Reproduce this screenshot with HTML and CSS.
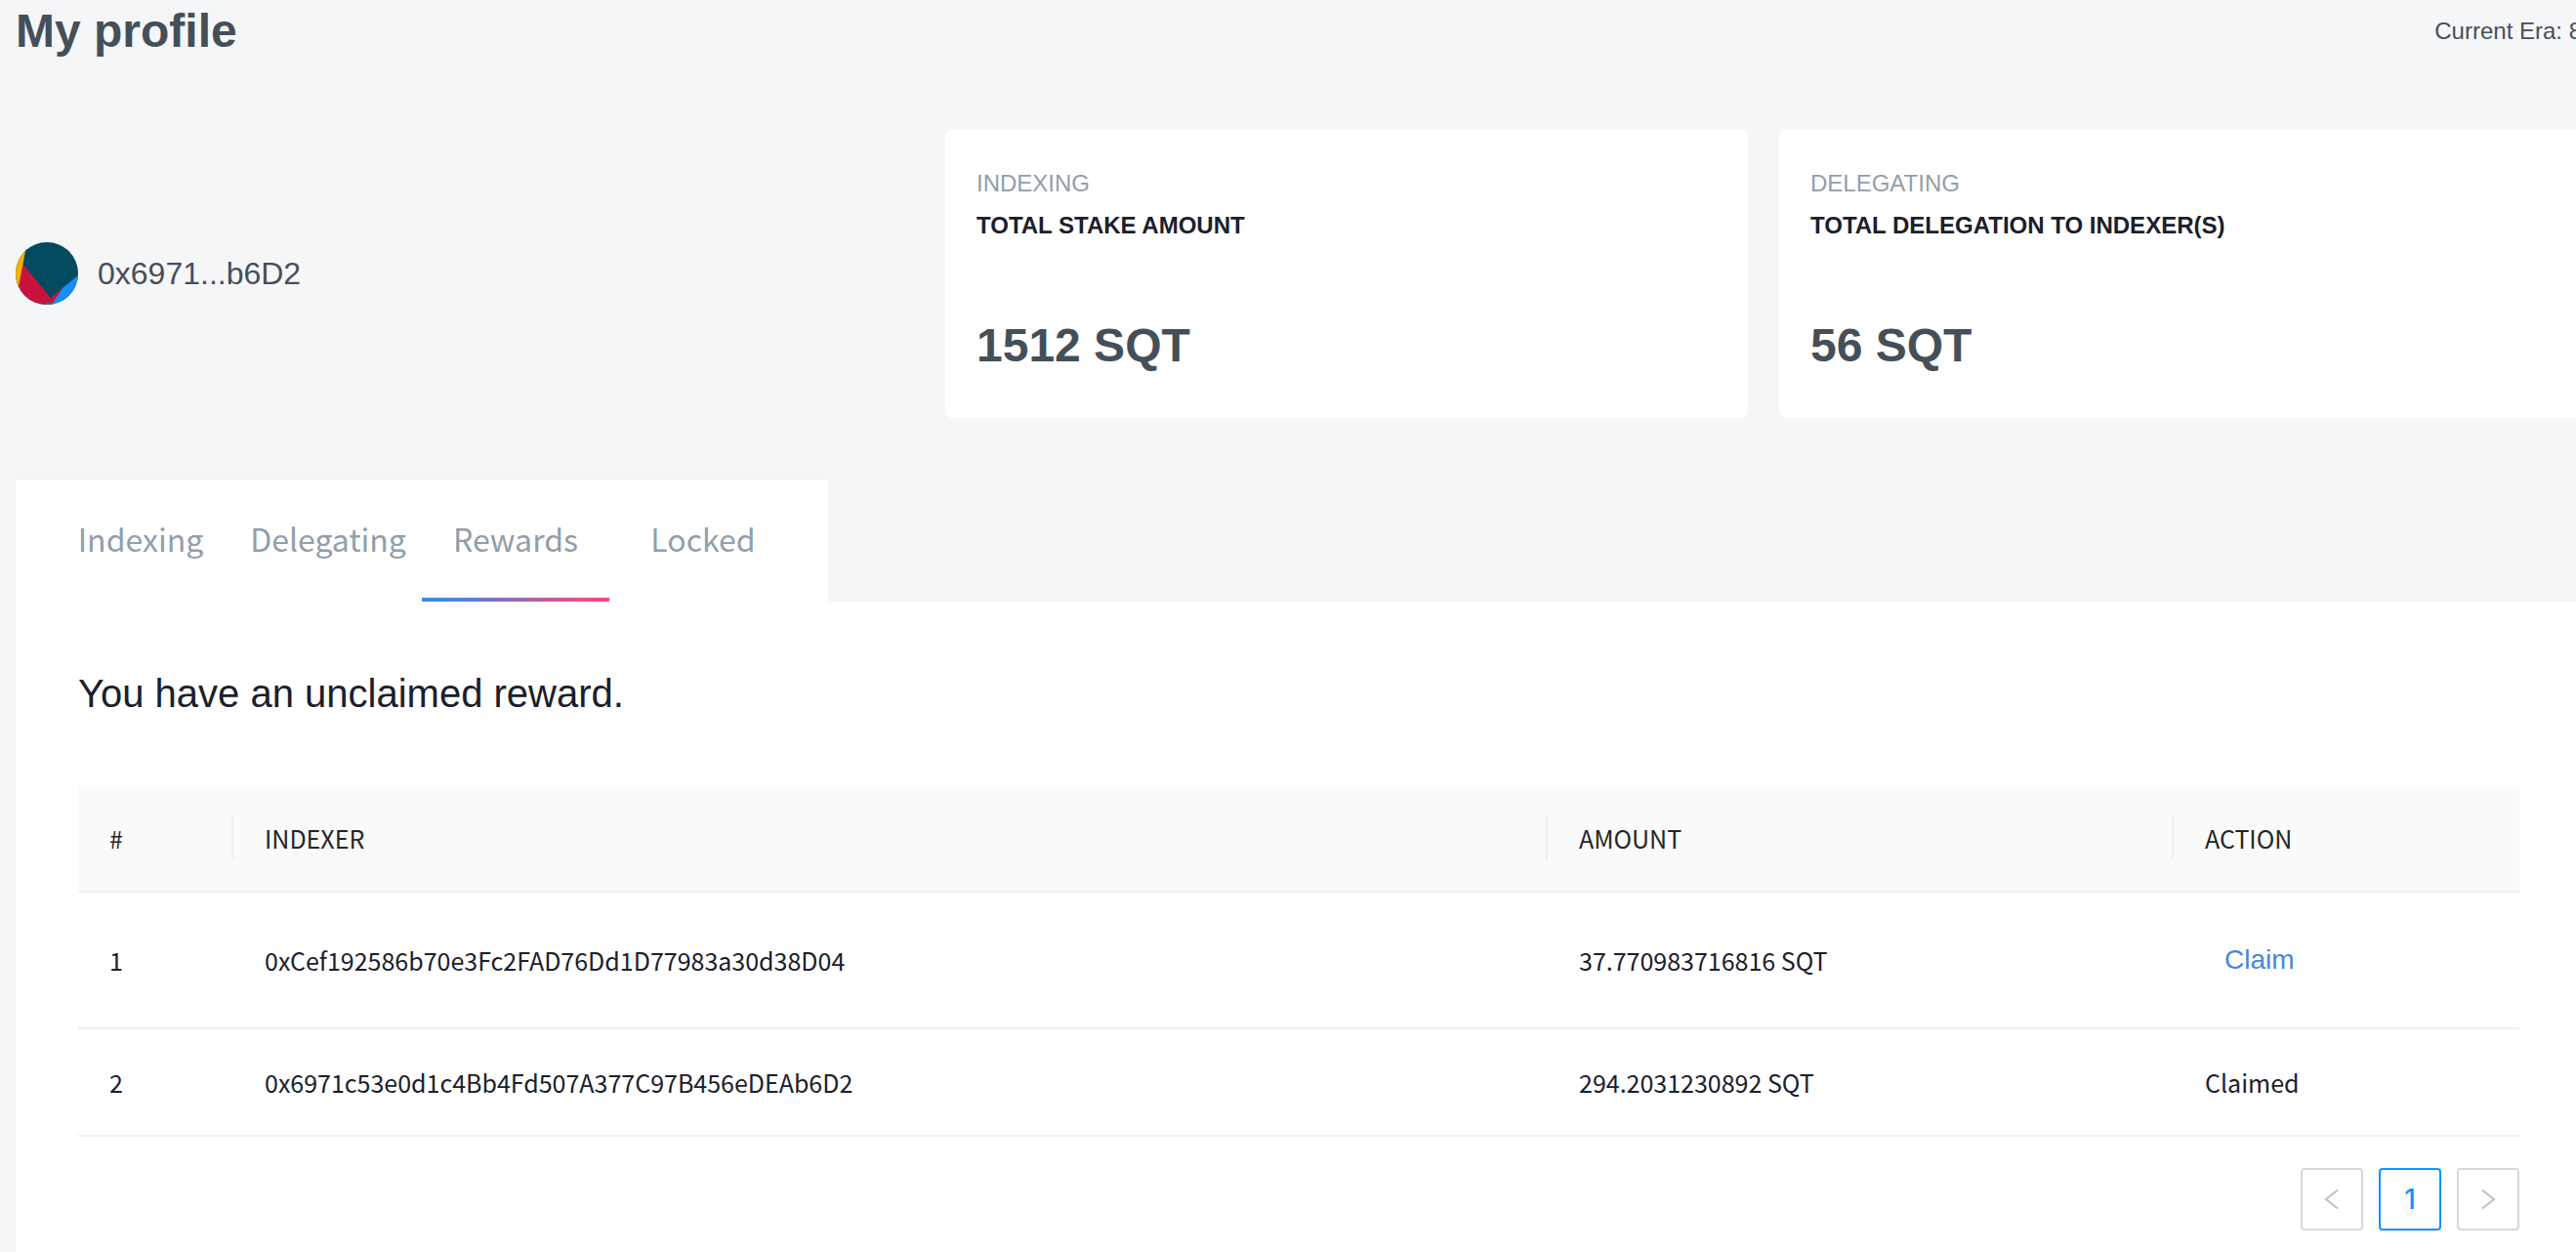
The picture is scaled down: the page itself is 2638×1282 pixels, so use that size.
FILE: index.html
```html
<!DOCTYPE html>
<html lang="en">
<head>
<meta charset="utf-8">
<title>My profile</title>
<link rel="stylesheet" href="styles.css">
</head>
<body>
<main class="profile">
  <header class="page-header">
    <h1 class="page-title">My profile</h1>
    <p class="era">Current Era: 8</p>
  </header>

  <section class="summary">
    <div class="account">
      <svg class="avatar" viewBox="0 0 64 64" aria-hidden="true">
        <defs><clipPath id="avatar-clip"><circle cx="32" cy="32" r="32"/></clipPath></defs>
        <g clip-path="url(#avatar-clip)">
          <rect width="64" height="64" fill="#024a5e"/>
          <path d="M7 22L36 57L48 47L38 64H0V40Z" fill="#c8143c"/>
          <path d="M0 8L10 9L3 46L0 46Z" fill="#f3b200"/>
          <path d="M64 34L48 47L37 64H64Z" fill="#198cf5"/>
          <path d="M28 64L35 61L37 64Z" fill="#187c84"/>
        </g>
      </svg>
      <span class="address">0x6971...b6D2</span>
    </div>
    <article class="card">
      <p class="card-category">INDEXING</p>
      <h2 class="card-title">TOTAL STAKE AMOUNT</h2>
      <p class="card-value">1512 SQT</p>
    </article>
    <article class="card">
      <p class="card-category">DELEGATING</p>
      <h2 class="card-title">TOTAL DELEGATION TO INDEXER(S)</h2>
      <p class="card-value">56 SQT</p>
    </article>
  </section>

  <nav class="tabs">
    <a class="tab" href="#indexing">Indexing</a>
    <a class="tab" href="#delegating">Delegating</a>
    <a class="tab tab-active" href="#rewards" aria-current="page">Rewards</a>
    <a class="tab" href="#locked">Locked</a>
  </nav>

  <section class="panel">
    <h2 class="panel-title">You have an unclaimed reward.</h2>
    <table class="rewards">
      <colgroup>
        <col class="col-index">
        <col>
        <col class="col-amount">
        <col class="col-action">
      </colgroup>
      <thead>
        <tr>
          <th scope="col"><span class="head-label">#</span></th>
          <th scope="col"><span class="head-label">INDEXER</span></th>
          <th scope="col"><span class="head-label">AMOUNT</span></th>
          <th scope="col"><span class="head-label">ACTION</span></th>
        </tr>
      </thead>
      <tbody>
        <tr>
          <td>1</td>
          <td>0xCef192586b70e3Fc2FAD76Dd1D77983a30d38D04</td>
          <td>37.770983716816 SQT</td>
          <td><button class="claim" type="button">Claim</button></td>
        </tr>
        <tr>
          <td>2</td>
          <td>0x6971c53e0d1c4Bb4Fd507A377C97B456eDEAb6D2</td>
          <td>294.2031230892 SQT</td>
          <td>Claimed</td>
        </tr>
      </tbody>
    </table>
    <nav class="pagination" aria-label="Pagination">
      <button class="page-button" type="button" disabled aria-label="Previous page">
        <svg class="chevron" viewBox="0 0 24 24" aria-hidden="true"><path d="M18 2.500L6 12L18 21.500"/></svg>
      </button>
      <button class="page-button page-current" type="button" aria-current="page">1</button>
      <button class="page-button" type="button" disabled aria-label="Next page">
        <svg class="chevron" viewBox="0 0 24 24" aria-hidden="true"><path d="M6 2.500L18 12L6 21.500"/></svg>
      </button>
    </nav>
  </section>
</main>
</body>
</html>
```
FILE: styles.css
```css
* { box-sizing: border-box; }

html { background: #f5f6f8; }

body {
  margin: 0;
  overflow-x: hidden;
  color: #1a202c;
  font-family: "Liberation Sans", Arial, sans-serif;
}

h1, h2, p { margin: 0; }

/* The content column runs slightly past the right edge of the window. */
.profile {
  display: flex;
  flex-direction: column;
  min-height: 100vh;
  margin: 0 -6px 0 16px;
}

.page-header {
  display: flex;
  align-items: center;
  justify-content: space-between;
  height: 64px;
  margin-bottom: 68px;
}

.page-title {
  color: #454f58;
  font-size: 48px;
  line-height: 64px;
}

.era {
  color: #454f58;
  font-size: 24px;
  line-height: 64px;
  white-space: nowrap;
}

.summary {
  display: grid;
  grid-template-columns: 920fr 822fr 822fr;
  gap: 32px;
  margin-bottom: 64px;
}

.account {
  display: flex;
  align-items: center;
  gap: 20px;
}

.avatar { width: 64px; height: 64px; }

.address {
  color: #454f58;
  font-size: 32px;
  line-height: 40px;
}

.card {
  padding: 36px 32px 42px;
  border-radius: 8px;
  background: #fff;
}

.card-category {
  color: #919eab;
  font-size: 24px;
  line-height: 40px;
}

.card-title {
  margin-top: 3px;
  font-size: 24px;
  line-height: 40px;
}

.card-value {
  margin-top: 71px;
  color: #454f58;
  font-size: 48px;
  font-weight: 700;
  line-height: 64px;
}

.tabs {
  display: flex;
  align-self: flex-start;
  padding: 0 32px;
  background: #fff;
}

.tab {
  width: 192px;
  height: 124px;
  border-bottom: 4px solid transparent;
  color: #919eab;
  font-family: "Noto Sans CJK SC", sans-serif;
  font-size: 32px;
  line-height: 118px;
  text-align: center;
  text-decoration: none;
}

.tab-active { border-image: linear-gradient(90deg, #4388dd 17%, #ff4581 92%) 4; }

.panel {
  flex: 1;
  padding: 62px 64px 24px;
  background: #fff;
}

.panel-title {
  margin-bottom: 62px;
  font-size: 40px;
  font-weight: 400;
  line-height: 64px;
}

.rewards {
  width: 100%;
  border-collapse: separate;
  border-spacing: 0;
  table-layout: fixed;
  font-family: "Noto Sans CJK SC", sans-serif;
  font-size: 25px;
  line-height: 44px;
  text-align: left;
}

.col-index { width: 159px; }
.col-amount { width: 641px; }
.col-action { width: 354px; }

.rewards th {
  padding: 32px 0;
  border-bottom: 2px solid #f0f0f0;
  background: #fafafa;
  color: #262626;
  font-weight: 400;
}

.rewards th:first-child { border-top-left-radius: 4px; }
.rewards th:last-child { border-top-right-radius: 4px; }

.head-label {
  display: block;
  padding-left: 32px;
  border-right: 2px solid #f0f0f0;
}

.rewards th:last-child .head-label { border-right: 0; }

.rewards td {
  padding: 32px;
  border-bottom: 2px solid #f0f0f0;
}

.claim {
  display: block;
  height: 74px;
  padding: 0 20px;
  border: 0;
  background: none;
  color: #4388dd;
  font-family: "Liberation Sans", Arial, sans-serif;
  font-size: 28px;
}

.pagination {
  display: flex;
  justify-content: flex-end;
  gap: 16px;
  margin-top: 32px;
}

.page-button {
  display: flex;
  align-items: center;
  justify-content: center;
  width: 64px;
  height: 64px;
  padding: 0;
  border: 2px solid #d9d9d9;
  border-radius: 4px;
  background: #fff;
  color: #bfbfbf;
  font-family: Inter, sans-serif;
  font-size: 28px;
  font-weight: 500;
}

.page-current {
  border-color: #1890ff;
  color: #1890ff;
}

.chevron {
  width: 24px;
  height: 24px;
  fill: none;
  stroke: currentColor;
  stroke-width: 2;
}
```
